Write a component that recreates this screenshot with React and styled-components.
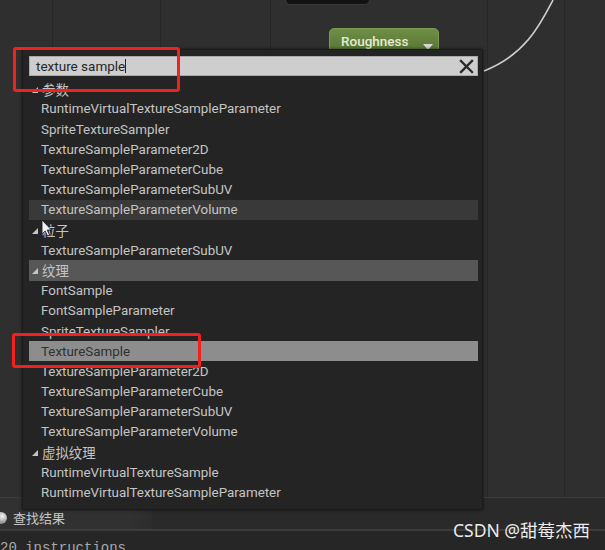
import React from 'react'
import styled, { createGlobalStyle } from 'styled-components'

const GlobalStyle = createGlobalStyle`
  html, body { margin: 0; padding: 0; background: #2e2e2e; }
  body { font-family: Roboto, "Noto Sans CJK SC", sans-serif; }
`

const rows = [
  { label: '参数', heading: true },
  { label: 'RuntimeVirtualTextureSampleParameter' },
  { label: 'SpriteTextureSampler' },
  { label: 'TextureSampleParameter2D' },
  { label: 'TextureSampleParameterCube' },
  { label: 'TextureSampleParameterSubUV' },
  { label: 'TextureSampleParameterVolume', state: 'hover' },
  { label: '粒子', heading: true },
  { label: 'TextureSampleParameterSubUV' },
  { label: '纹理', heading: true, state: 'category' },
  { label: 'FontSample' },
  { label: 'FontSampleParameter' },
  { label: 'SpriteTextureSampler' },
  { label: 'TextureSample', state: 'selected' },
  { label: 'TextureSampleParameter2D' },
  { label: 'TextureSampleParameterCube' },
  { label: 'TextureSampleParameterSubUV' },
  { label: 'TextureSampleParameterVolume' },
  { label: '虚拟纹理', heading: true },
  { label: 'RuntimeVirtualTextureSample' },
  { label: 'RuntimeVirtualTextureSampleParameter' },
]

const rowBg = { hover: '#393939', category: '#575757', selected: '#8d8d8d' }

const Screen = styled.div`
  position: relative;
  width: 605px;
  height: 550px;
  overflow: hidden;
  display: flex;
  flex-direction: column;
  background: #2e2e2e;
`

const gridLine = (x) => `linear-gradient(#262626, #262626) ${x}px 0 / 1px 100% no-repeat`

const GraphCanvas = styled.div`
  position: relative;
  flex: none;
  height: 497px;
  background: ${[52, 160, 270, 487, 564].map(gridLine).join(', ')}, #2f2f2f;
  border-bottom: 1px solid #3c3c3c;
`

const TopNode = styled.div`
  position: absolute;
  left: 285px;
  top: -12px;
  width: 83px;
  height: 15px;
  background: #131313;
  border: 1px solid #3a3a3a;
  border-radius: 5px;
`

const ParamNode = styled.div`
  position: absolute;
  left: 329px;
  top: 28px;
  width: 110px;
  height: 30px;
  box-sizing: border-box;
  padding: 4px 0 0 11px;
  border-radius: 5px;
  border: 1px solid #7d9a55;
  background: linear-gradient(#6f8e46, #52702f);
  color: #e2ebd2;
  font-size: 13.5px;
  font-weight: 500;
`

const NodeArrow = styled.span`
  position: absolute;
  right: 5px;
  top: 15px;
  border-left: 5px solid transparent;
  border-right: 5px solid transparent;
  border-top: 6px solid #d8d8d8;
`

const Wire = styled.svg`
  position: absolute;
  left: 470px;
  top: 0;
`

const Popup = styled.div`
  position: absolute;
  left: 22px;
  top: 49px;
  width: 461px;
  height: 461px;
  box-sizing: border-box;
  padding: 6px 4px 0 6px;
  display: flex;
  flex-direction: column;
  background: #242424;
  border: 1px solid #1b1b1b;
  box-shadow: 0 0 3px rgba(0, 0, 0, 0.6);
`

const SearchBox = styled.div`
  flex: none;
  height: 20px;
  box-sizing: border-box;
  display: flex;
  align-items: center;
  padding: 0 3px 0 6px;
  background: #cecece;
  border: 1px solid #a9a9a9;
  color: #262626;
  font-size: 13.5px;
`

const Caret = styled.span`
  width: 1px;
  height: 14px;
  background: #222;
`

const ClearButton = styled.svg`
  margin-left: auto;
`

const List = styled.div`
  margin-top: 2.7px;
  flex: 1;
  overflow: hidden;
`

const Row = styled.div`
  height: 20.2px;
  display: flex;
  align-items: center;
  padding-left: ${(p) => (p.$heading ? '3px' : '12px')};
  background: ${(p) => rowBg[p.$state] || 'transparent'};
  color: ${(p) => (p.$state === 'selected' ? '#303030' : '#c4c4c4')};
  font-size: 13.4px;
  white-space: nowrap;
`

const Fold = styled.span`
  width: 0;
  height: 0;
  margin: 2px 4px 0 0;
  border-left: 6px solid transparent;
  border-bottom: 6px solid #c4c4c4;
`

const Highlight = styled.div`
  position: absolute;
  left: ${(p) => p.$x}px;
  top: ${(p) => p.$y}px;
  width: ${(p) => p.$w}px;
  height: ${(p) => p.$h}px;
  box-sizing: border-box;
  border: 3px solid #f2211f;
  border-radius: 3px;
`

const Cursor = styled.svg`
  position: absolute;
  left: 41px;
  top: 219px;
`

const BottomPanel = styled.div`
  flex: 1;
  display: flex;
  flex-direction: column;
`

const TabBar = styled.div`
  flex: none;
  height: 31px;
  display: flex;
  background: #2a2a2a;
  border-bottom: 2px solid #3d3d3d;
`

const Tab = styled.div`
  width: 152px;
  display: flex;
  align-items: center;
  gap: 6px;
  padding: 8px 0 0 0;
  background: linear-gradient(90deg, #313131 85%, #2c2c2c);
  color: #c6c6c6;
  font-size: 13px;
`

const Globe = styled.span`
  width: 12px;
  height: 12px;
  margin-left: -5px;
  border-radius: 50%;
  background: radial-gradient(circle at 60% 35%, #f4f4f4, #9a9a9a 60%, #555);
`

const Output = styled.div`
  flex: 1;
  padding: 9px 0 0 0;
  background: #262626;
  color: #a9a9a9;
  font-family: "Liberation Mono", monospace;
  font-size: 14px;
  line-height: 16px;
  white-space: nowrap;
`

const Watermark = styled.div`
  position: absolute;
  right: 15px;
  top: 517px;
  color: #ececec;
  font-family: "Noto Sans", "Noto Sans CJK SC", sans-serif;
  font-size: 17.5px;
  text-shadow: 0 0 1px rgba(0, 0, 0, 0.4);
`

export default function App() {
  return (
    <>
      <GlobalStyle />
      <Screen>
        <GraphCanvas>
          <TopNode />
          <ParamNode>
            Roughness
            <NodeArrow />
          </ParamNode>
          <Wire width="90" height="80" viewBox="0 0 90 80">
            <path d="M83 0 C70 25 55 55 14 71" fill="none" stroke="#cfcfcf" strokeWidth="1.6" />
          </Wire>
        </GraphCanvas>
        <BottomPanel>
          <TabBar>
            <Tab>
              <Globe />
              查找结果
            </Tab>
          </TabBar>
          <Output>20 instructions</Output>
        </BottomPanel>

        <Popup>
          <SearchBox>
            texture sample
            <Caret />
            <ClearButton width="15" height="15" viewBox="0 0 15 15">
              <path d="M2 2 L13 13 M13 2 L2 13" stroke="#2a2a2a" strokeWidth="2.4" strokeLinecap="square" />
            </ClearButton>
          </SearchBox>
          <List>
            {rows.map((r, i) => (
              <Row key={i} $heading={r.heading} $state={r.state}>
                {r.heading && <Fold />}
                {r.label}
              </Row>
            ))}
          </List>
        </Popup>

        <Cursor width="11" height="18" viewBox="0 0 11 18">
          <path d="M1 1 L1 15 L4.2 12 L6.5 17 L8.6 16 L6.3 11 L10.5 11 Z" fill="#f2f2f2" stroke="#222" strokeWidth="0.9" />
        </Cursor>
        <Highlight $x={13} $y={47} $w={167} $h={45} />
        <Highlight $x={12} $y={333} $w={189} $h={35} />
        <Watermark>CSDN @甜莓杰西</Watermark>
      </Screen>
    </>
  )
}
